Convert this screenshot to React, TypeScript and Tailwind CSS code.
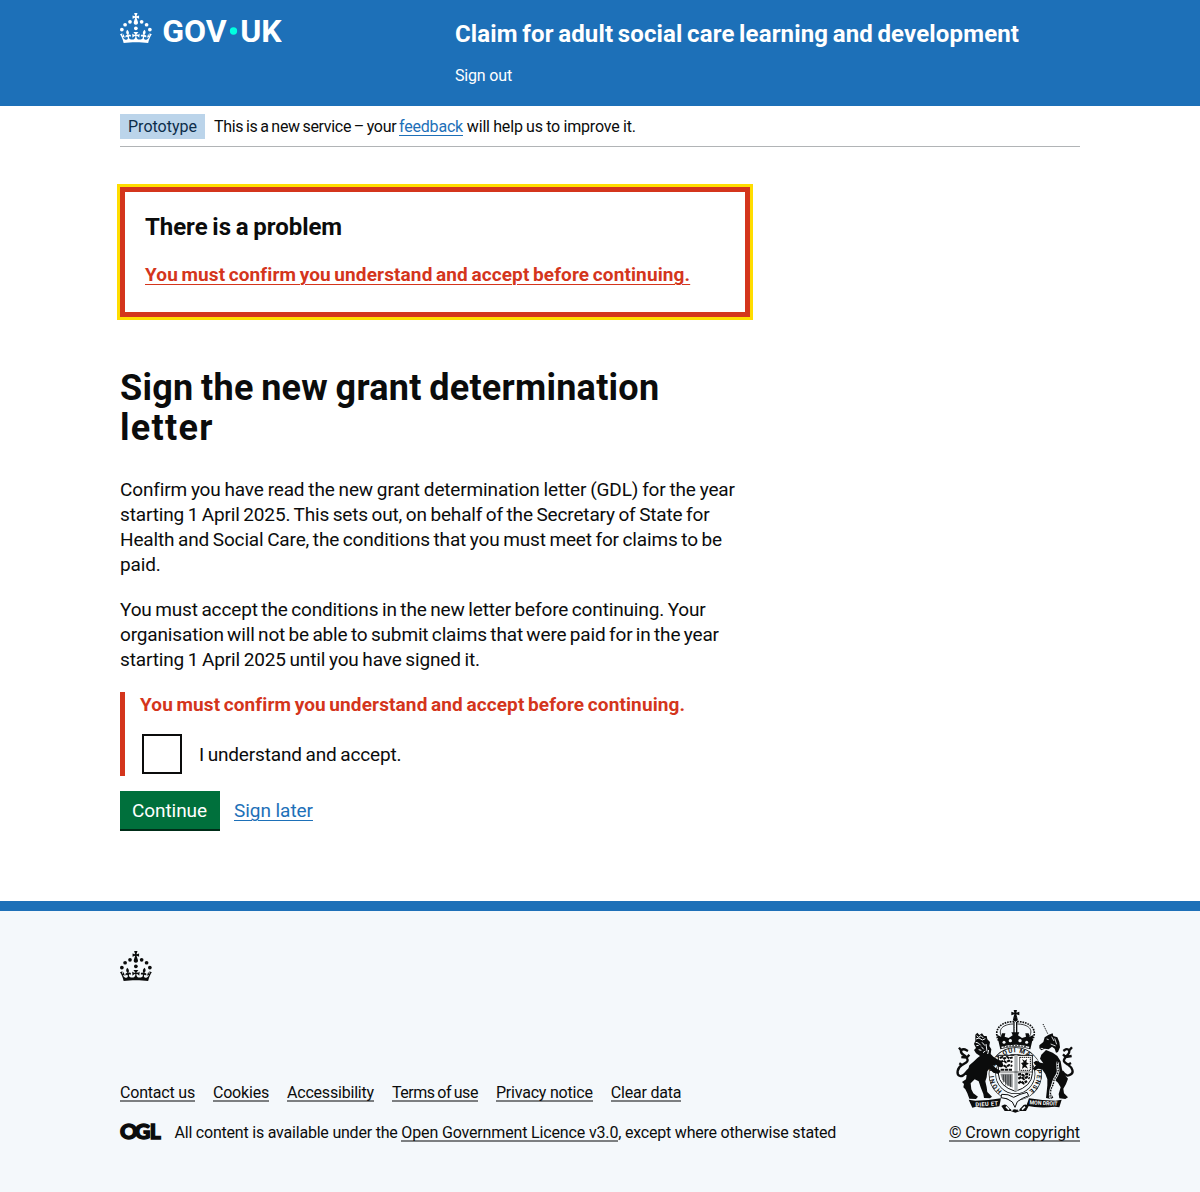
import type { ReactNode } from "react";

function CrownShapes() {
  return (
    <g>
      <circle cx="20" cy="17.6" r="3.7" />
      <circle cx="10.2" cy="23.5" r="3.7" />
      <circle cx="3.7" cy="33.2" r="3.7" />
      <circle cx="31.7" cy="30.6" r="3.7" />
      <circle cx="43.3" cy="17.6" r="3.7" />
      <circle cx="53.2" cy="23.5" r="3.7" />
      <circle cx="59.7" cy="33.2" r="3.7" />
      <path d="M33.1,9.8c.2-.1.3-.3.5-.5l4.6,2.4v-6.8l-4.6,1.5c-.1-.2-.3-.3-.5-.5l1.9-5.9h-6.7l1.9,5.9c-.2.1-.3.3-.5.5l-4.6-1.5v6.8l4.6-2.4c.1.2.3.3.5.5l-2.6,8c-.9,2.8,1.2,5.7,4.1,5.7h0c3,0,5.1-2.9,4.1-5.7l-2.6-8ZM37,37.9s-3.4,3.8-4.1,6.1c2.2,0,4.2-.5,6.4-2.8l-.7,8.5c-2-2.8-4.4-4.1-5.7-3.8.1,3.1.5,6.7,5.8,7.2,3.7.3,6.7-1.5,7-3.8.4-2.6-2-4.3-3.7-1.6-1.4-4.5,2.4-6.1,4.9-3.2-1.9-4.5-1.8-7.7,2.4-10.9,3,4,2.6,7.3-1.2,11.1,2.4-1.3,6.2,0,4,4.6-1.2-2.8-3.7-2.2-4.2.2-.3,1.7.7,3.7,3,4.2,1.9.3,4.7-.9,7-5.9-1.3,0-2.4.7-3.9,1.7l2.4-8c.6,2.3,1.4,3.7,2.2,4.5.6-1.6.5-2.8,0-5.3l5,1.8c-2.6,3.6-5.2,8.7-7.3,17.5-7.4-1.1-15.7-1.7-24.5-1.7h0c-8.8,0-17.1.6-24.5,1.7-2.1-8.9-4.7-13.9-7.3-17.5l5-1.8c-.5,2.5-.6,3.7,0,5.3.8-.8,1.6-2.3,2.2-4.5l2.4,8c-1.5-1-2.6-1.7-3.9-1.7,2.3,5,5.2,6.2,7,5.9,2.3-.4,3.3-2.4,3-4.2-.5-2.4-3-3.1-4.2-.2-2.2-4.6,1.6-6,4-4.6-3.7-3.7-4.2-7.1-1.2-11.1,4.2,3.2,4.3,6.4,2.4,10.9,2.5-2.8,6.3-1.3,4.9,3.2-1.8-2.7-4.1-1-3.7,1.6.3,2.3,3.3,4.1,7,3.8,5.4-.5,5.7-4.2,5.8-7.2-1.3-.2-3.7,1-5.7,3.8l-.7-8.5c2.2,2.3,4.2,2.7,6.4,2.8-.7-2.3-4.1-6.1-4.1-6.1h10.6Z" />
    </g>
  );
}

function GovUkLogo() {
  return (
    <svg viewBox="0 0 324 76" width="162" height="38" className="block" fill="#fff" role="img" aria-label="GOV.UK">
      <CrownShapes />
      <circle cx="227" cy="36" r="7.3" fill="#00ffe0" />
      <g fontFamily="Roboto, sans-serif" fontWeight="700" fontSize="61">
        <text x="84.5" y="57.8" textLength="129" lengthAdjust="spacingAndGlyphs">GOV</text>
        <text x="240.5" y="57.8" textLength="83" lengthAdjust="spacingAndGlyphs">UK</text>
      </g>
    </svg>
  );
}

function OglLogo() {
  return (
    <svg viewBox="0 0 41 17" width="41" height="17" className="block shrink-0 overflow-visible" fill="#0b0c0c" stroke="#0b0c0c" role="img" aria-label="OGL">
      <g fontFamily="Lato, sans-serif" fontWeight="900" fontSize="21" strokeWidth="1.4">
        <text x="0" y="16.5" textLength="17.6" lengthAdjust="spacingAndGlyphs">O</text>
        <text x="14.8" y="16.5" textLength="15.6" lengthAdjust="spacingAndGlyphs">G</text>
        <text x="29.8" y="16.5" textLength="11" lengthAdjust="spacingAndGlyphs">L</text>
      </g>
    </svg>
  );
}

/* Royal coat of arms: crown, garter with quartered shield, lion, unicorn and motto ribbons */
function RoyalArms() {
  return (
    <svg viewBox="27 30 393 309" width="131" height="103" className="block" fill="#0b0c0c">
      {/* garter */}
      <circle cx="226" cy="222" r="69" fill="#f4f8fb" stroke="#0b0c0c" strokeWidth="22" />
      <circle cx="226" cy="222" r="69" fill="none" stroke="#f4f8fb" strokeWidth="18" />
      <path id="garter" d="M186 273A65 65 0 1 1 266 273" fill="none" />
      <text fontFamily="Roboto, sans-serif" fontWeight="700" fontSize="19">
        <textPath href="#garter" startOffset="0" textLength="320">HONI SOIT QUI MAL Y PENSE</textPath>
      </text>

      {/* crown */}
      <path d="M221 30h10l-2 8 9-3v11l-9-3 3 10h-12l3-10-9 3v-11l9 3z" />
      <circle cx="226" cy="58" r="7" />
      <g fill="none" stroke="#0b0c0c">
        <path d="M176 122C158 88 184 64 222 65M276 122C296 88 270 64 230 65" strokeWidth="5" strokeDasharray="5 3" />
        <path d="M184 108C172 84 196 72 220 72M269 108C282 84 258 72 232 72" strokeWidth="2.5" />
        <path d="M222 66v36M230 66v36" strokeWidth="4" />
        <path d="M226 70v30" stroke="#fff" strokeWidth="3" strokeDasharray="4 3" />
      </g>
      <path d="M171 104l12 6 3-10 10 0-2 10 12 4 12-8-4-9h24l-4 9 12 8 12-4-2-10h10l3 10 12-6-10 44q-45-15-90 0z" />
      <g fill="#f4f8fb">
        <circle cx="192" cy="127" r="4.5" /><circle cx="211" cy="122" r="5" /><circle cx="240" cy="122" r="5" /><circle cx="260" cy="127" r="4.5" />
        <path d="M184 140q42-12 84 0l-1 5q-41-12-82 0z" />
      </g>
      <path d="M190 141q36-8 72 0" fill="none" stroke="#0b0c0c" strokeWidth="3" strokeDasharray="5 4" />

      {/* shield */}
      <path d="M175 166h102v55q-2 38-51 53-49-15-51-53z" fill="#fff" stroke="#0b0c0c" strokeWidth="3" />
      <path d="M179 174l9-3 5 5 8-5 7 4 10-3M180 186l11-4 7 5 9-5 10 4M181 200l9-5 9 6 8-6 10 3M182 209h35" fill="none" stroke="#0b0c0c" strokeWidth="6" strokeDasharray="10 2" />
      <path d="M239 172h32v39h-32z" fill="none" stroke="#0b0c0c" strokeWidth="3" strokeDasharray="4 2" />
      <path d="M246 177l8 5 7-5-2 10 8 4-9 4 6 11-10-5-8 6 2-11-5-7 8-2z" />
      <path d="M181 221h37v42l-17-9-15-16z" fill="#8d9092" />
      <path d="M190 224v23M197 224v32M204 224v34M211 224v37" stroke="#0b0c0c" strokeWidth="2" />
      <path d="M234 224l10-2 7 5 9-5 10 3M235 236l9-5 8 6 9-6 8 4M235 250l8-6 8 6 10-7" fill="none" stroke="#0b0c0c" strokeWidth="7" strokeDasharray="10 2" />
      <path d="M228 165v109" stroke="#aeb2b4" strokeWidth="10" />
      <path d="M175 216h102" stroke="#0b0c0c" strokeWidth="2" />

      {/* lion */}
      <path d="M106 104L112 98 118 105 126 100 132 108 140 108 142 118 150 126 148 138 154 148 152 162 160 170 172 178 186 184 190 196 180 202 168 194 158 196 170 206 182 212 176 222 160 218 148 206 142 214 140 232 136 244 140 262 142 276 156 290 150 295 132 294 130 282 122 262 116 244 104 238 92 250 94 268 100 280 114 290 108 297 88 296 82 280 76 268 70 262 72 252 66 246 78 238 80 226 72 222 84 210 88 196 102 184 112 174 120 168 108 160 102 150 108 144 102 132 106 122z" />
      <path d="M110 107l6 5 7-5 7 7M108 117l9-3 10 6 9-4M107 127l8 2 7 7M109 137l7-1M126 127l9 10M124 140l7 8M116 149l8 2M138 132l3 22M129 158l7-5M146 150l-3 12" fill="none" stroke="#f4f8fb" strokeWidth="3" />
      <path d="M88 208C76 216 72 232 60 228S51 204 66 195 87 184 80 173 61 165 63 151M80 173l8-9M80 173l-16-2M63 151l-6-8M63 151c9-8 13-2 21 2M66 195l-8-5" fill="none" stroke="#0b0c0c" strokeWidth="7" />

      {/* unicorn */}
      <path d="M309 72l15 31" stroke="#0b0c0c" strokeWidth="3" strokeDasharray="4 3" />
      <path d="M298 136L310 126 314 112 326 104 338 100 340 108 352 112 358 126 360 142 354 156 348 158 344 146 336 140 326 148 314 146 304 151 298 145z" />
      <path d="M302 145l8 1M320 117l6 2M335 110l7 13M344 115l6 18M332 132l15 6" fill="none" stroke="#f4f8fb" strokeWidth="2.5" />
      <path d="M318 150L338 158 352 168 362 184 366 208 372 222 384 236 378 252 370 266 372 280 384 292 376 297 358 295 356 282 362 262 354 248 342 238 336 246 332 264 334 282 340 293 332 297 318 294 320 276 322 256 322 238 316 222 306 208 294 206 284 212 278 206 288 196 280 188 288 182 302 188 310 190 300 176 304 164z" />
      <path d="M354 186c-5 14 4 20-1 34s-10 12-12 26-8 16-9 28-4 18 2 20" fill="none" stroke="#f4f8fb" strokeWidth="8" />
      <path d="M354 186c-5 14 4 20-1 34s-10 12-12 26-8 16-9 28-4 18 2 20" fill="none" stroke="#0b0c0c" strokeWidth="4" strokeDasharray="5 3" />
      <path d="M367 214C378 229 384 229 393 223S398 204 384 194 368 183 377 171 389 163 388 151M377 171l-8-8M377 171l18-3M388 151l8-9M388 151c-8-8-12-2-18 2M384 194l9-5" fill="none" stroke="#0b0c0c" strokeWidth="7" />

      {/* buckle and ribbons */}
      <path d="M185 283q20-2 36 9 18-10 40-15l5 10q-22 8-34 18l-7 17-8-16q-15-13-34-13z" fill="#f4f8fb" stroke="#0b0c0c" strokeWidth="3" />
      <path d="M86 299l20 3q40 0 77-7l-5 24q-36 8-70 1l-11 3z" />
      <path d="M365 299l-18 3q-40 0-80-7l-8 22q40 9 85 3l14 2z" />
      <g fill="#fff" fontFamily="Roboto, sans-serif" fontWeight="700" fontSize="17">
        <text x="106" y="318" textLength="68" transform="rotate(-3 140 310)">DIEU ET</text>
        <text x="269" y="315" textLength="84" lengthAdjust="spacingAndGlyphs" transform="rotate(3 310 310)">MON DROIT</text>
      </g>
      <path d="M184 318q12-10 20 2t20 8q14 4 22-8t20-2l-8 15h-18l-14 5-14-5h-18z" />
      <path d="M198 320l9 9M216 318v14M236 318v14M255 320l-9 9" stroke="#f4f8fb" strokeWidth="5" />
    </svg>
  );
}

function FooterLink({ children, className = "" }: { children: ReactNode; className?: string }) {
  return (
    <a href="#" className={"inline-block border-b-2 border-[#7c7f81] leading-[15px] " + className}>
      {children}
    </a>
  );
}

export default function App() {
  return (
    <div className="flex min-h-[1192px] flex-col bg-white font-['Roboto',sans-serif] text-[#0b0c0c]">
      <header className="h-[106px] bg-[#1d70b8] text-white">
        <div className="mx-auto flex w-[960px]">
          <div className="w-[335px] pt-[13px]">
            <GovUkLogo />
          </div>
          <div className="pt-[19px]">
            <p className="text-2xl leading-[30px] font-bold tracking-[0.15px] whitespace-nowrap [word-spacing:-1.6px]">
              Claim for adult social care learning and development
            </p>
            <a href="#" className="mt-[17px] block text-base leading-5 tracking-[-0.17px]">
              Sign out
            </a>
          </div>
        </div>
      </header>

      <main className="mx-auto w-[960px] grow">
        <div className="flex h-[41px] items-center border-b border-[#b1b4b6] text-base leading-5">
          <strong className="mr-[9px] flex h-[25px] w-[85px] items-center justify-center bg-[#bbd4ea] pt-0.5 font-normal text-[#0c2d4a]">
            Prototype
          </strong>
          <span className="pt-0.5 tracking-[-0.2px] whitespace-nowrap">
            <span className="tracking-[-0.32px] [word-spacing:-0.9px]">This is a new service – your </span>
            <a
              href="#"
              className="text-[#1d70b8] underline decoration-1 underline-offset-[2.5px]"
            >
              feedback
            </a>{" "}
            <span className="tracking-[-0.15px] [word-spacing:-0.5px]">will help us to improve it.</span>
          </span>
        </div>

        <section className="mt-10 h-[130px] w-[630px] border-[5px] border-[#d4351c] p-5 outline-[3px] outline-[#ffdd00] outline-solid">
          <h2 className="text-2xl leading-[30px] font-bold tracking-[-0.05px] [word-spacing:-1.1px]">There is a problem</h2>
          <a
            href="#"
            className="mt-5 block text-[19px] leading-[25px] font-bold tracking-[0.12px] whitespace-nowrap text-[#d4351c] underline decoration-1 underline-offset-[3px] [word-spacing:-1.3px]"
          >
            You must confirm you understand and accept before continuing.
          </a>
        </section>

        <h1 className="mt-[51px] text-4xl leading-[40px] font-bold whitespace-nowrap">
          <span className="block tracking-[0.25px] [word-spacing:-1.6px]">Sign the new grant determination</span>
          <span className="block tracking-[1.3px]">letter</span>
        </h1>

        <p className="mt-[29px] text-[19px] leading-[25px] tracking-[-0.15px] whitespace-nowrap">
          <span className="block [word-spacing:-0.65px]">Confirm you have read the new grant determination letter (GDL) for the year</span>
          <span className="block [word-spacing:-0.99px]">starting 1 April 2025. This sets out, on behalf of the Secretary of State for</span>
          <span className="block [word-spacing:-0.91px]">Health and Social Care, the conditions that you must meet for claims to be</span>
          <span className="block">paid.</span>
        </p>
        <p className="mt-5 text-[19px] leading-[25px] tracking-[-0.15px] whitespace-nowrap">
          <span className="block [word-spacing:-0.96px]">You must accept the conditions in the new letter before continuing. Your</span>
          <span className="block [word-spacing:-1.16px]">organisation will not be able to submit claims that were paid for in the year</span>
          <span className="block [word-spacing:-0.85px]">starting 1 April 2025 until you have signed it.</span>
        </p>

        <div className="mt-5 border-l-[5px] border-[#d4351c] pl-[15px]">
          <p className="text-[19px] leading-[25px] font-bold tracking-[0.12px] text-[#d4351c] [word-spacing:-1.3px]">
            You must confirm you understand and accept before continuing.
          </p>
          <label className="mt-[15px] flex h-11 items-center pl-0.5 text-[19px] leading-[25px]">
            <input type="checkbox" className="size-10 appearance-none border-2 border-[#0b0c0c] bg-white" />
            <span className="ml-[17px] tracking-[-0.15px] [word-spacing:-0.95px]">I understand and accept.</span>
          </label>
        </div>

        <div className="mt-[15px] flex items-start text-[19px] leading-[25px]">
          <button className="h-[38px] w-[100px] bg-[#00703c] pr-px tracking-[-0.07px] text-white shadow-[0_2px_0_#002d18]">
            Continue
          </button>
          <a href="#" className="mt-[7px] ml-3.5 tracking-[-0.05px] text-[#1d70b8] underline decoration-1 underline-offset-[3px]">
            Sign later
          </a>
        </div>
      </main>

      <footer className="h-[291px] border-t-[10px] border-[#1d70b8] bg-[#f4f8fb] text-base">
        <div className="mx-auto w-[960px] pt-10">
          <svg viewBox="0 0 64 60" width="32" height="30" className="block" fill="#0b0c0c">
            <CrownShapes />
          </svg>
          <div className="mt-[29px] flex items-end justify-between">
            <div className="pb-0.5">
              <nav className="flex gap-[18px] tracking-[-0.2px] whitespace-nowrap">
                <FooterLink>Contact us</FooterLink>
                <FooterLink>Cookies</FooterLink>
                <FooterLink>Accessibility</FooterLink>
                <FooterLink className="tracking-[-0.45px] [word-spacing:-0.9px]">Terms of use</FooterLink>
                <FooterLink>Privacy notice</FooterLink>
                <FooterLink>Clear data</FooterLink>
              </nav>
              <div className="mt-5 flex h-5 items-start">
                <OglLogo />
                <p className="mt-px ml-[13.5px] leading-5 tracking-[-0.21px] whitespace-nowrap">
                  All content is available under the{" "}
                  <FooterLink className="tracking-[-0.15px]">Open Government Licence v3.0</FooterLink>, except where
                  otherwise stated
                </p>
              </div>
            </div>
            <div className="flex flex-col items-end">
              <RoyalArms />
              <FooterLink className="mt-3 mb-0.5 tracking-[-0.087px]">© Crown copyright</FooterLink>
            </div>
          </div>
        </div>
      </footer>
    </div>
  );
}
